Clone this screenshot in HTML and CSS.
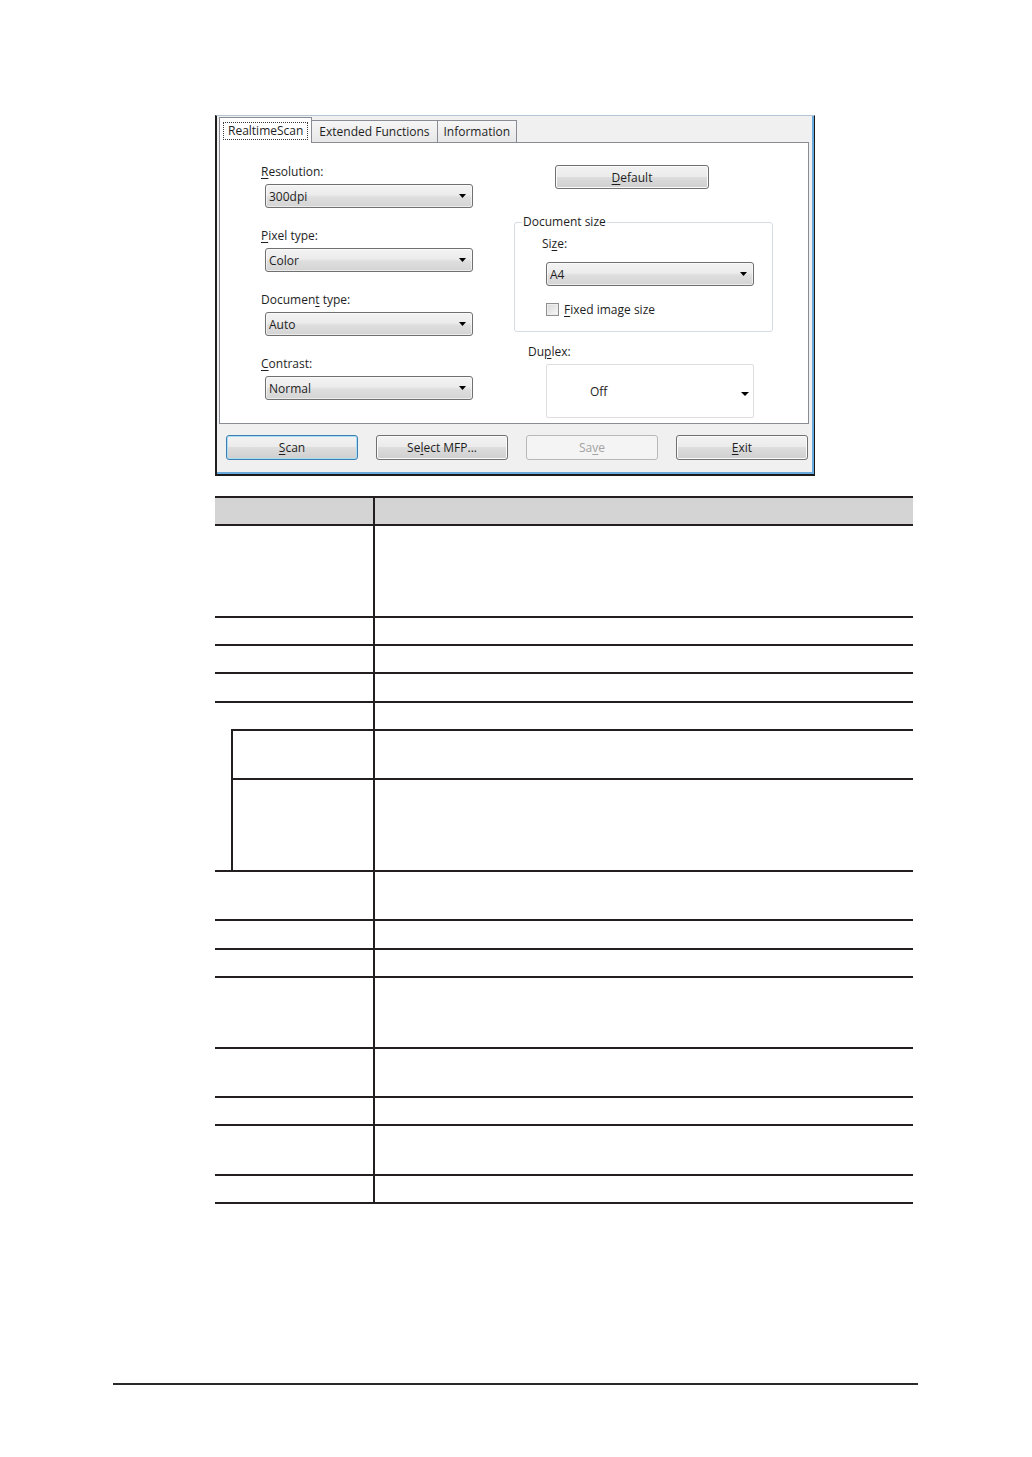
FILE: index.html
```html
<!DOCTYPE html>
<html>
<head>
<meta charset="utf-8">
<title>RealtimeScan</title>
<link rel="stylesheet" href="styles.css">
</head>
<body>
<div class="page">
  <div class="dialog">
    <div class="tabs">
      <div class="tab active"><span class="focus">RealtimeScan</span></div>
      <div class="tab tab-wide">Extended Functions</div>
      <div class="tab">Information</div>
    </div>
    <div class="panel">
      <div class="col-left">
        <div class="label"><u>R</u>esolution:</div>
        <div class="combo"><span>300dpi</span><svg class="arrow" width="7" height="4" viewBox="0 0 7 4"><path d="M0 0H7L3.5 4Z"/></svg></div>
        <div class="label"><u>P</u>ixel type:</div>
        <div class="combo"><span>Color</span><svg class="arrow" width="7" height="4" viewBox="0 0 7 4"><path d="M0 0H7L3.5 4Z"/></svg></div>
        <div class="label">Documen<u>t</u> type:</div>
        <div class="combo"><span>Auto</span><svg class="arrow" width="7" height="4" viewBox="0 0 7 4"><path d="M0 0H7L3.5 4Z"/></svg></div>
        <div class="label"><u>C</u>ontrast:</div>
        <div class="combo"><span>Normal</span><svg class="arrow" width="7" height="4" viewBox="0 0 7 4"><path d="M0 0H7L3.5 4Z"/></svg></div>
      </div>
      <div class="col-right">
        <div class="btn btn-default"><u>D</u>efault</div>
        <fieldset class="docsize">
          <legend>Document size</legend>
          <div class="label size-label">Si<u>z</u>e:</div>
          <div class="combo size-combo"><span>A4</span><svg class="arrow" width="7" height="4" viewBox="0 0 7 4"><path d="M0 0H7L3.5 4Z"/></svg></div>
          <div class="check-row"><span class="checkbox"></span><span><u>F</u>ixed image size</span></div>
        </fieldset>
        <div class="label duplex-label">Du<u>p</u>lex:</div>
        <div class="duplex"><span>Off</span><svg class="arrow arrow-duplex" width="8" height="4" viewBox="0 0 8 4"><path d="M0 0H8L4 4Z"/></svg></div>
      </div>
    </div>
    <div class="actions">
      <div class="btn btn-action btn-focus"><span><u>S</u>can</span></div>
      <div class="btn btn-action"><span>Se<u>l</u>ect MFP...</span></div>
      <div class="btn btn-action btn-disabled"><span>Sa<u>v</u>e</span></div>
      <div class="btn btn-action"><span><u>E</u>xit</span></div>
    </div>
  </div>

  <div class="table">
    <div class="row head h26"><div class="c1"></div><div class="c2"></div></div>
    <div class="row h90"><div class="c1"></div><div class="c2"></div></div>
    <div class="row h26"><div class="c1"></div><div class="c2"></div></div>
    <div class="row h26"><div class="c1"></div><div class="c2"></div></div>
    <div class="row h27"><div class="c1"></div><div class="c2"></div></div>
    <div class="group">
      <div class="row plain h26"><div class="c1"></div><div class="c2"></div></div>
      <div class="subgroup">
        <div class="subrow h47"><div class="c1"></div><div class="c2"></div></div>
        <div class="subrow h90"><div class="c1"></div><div class="c2"></div></div>
      </div>
    </div>
    <div class="row h47"><div class="c1"></div><div class="c2"></div></div>
    <div class="row h27"><div class="c1"></div><div class="c2"></div></div>
    <div class="row h26"><div class="c1"></div><div class="c2"></div></div>
    <div class="row h69"><div class="c1"></div><div class="c2"></div></div>
    <div class="row h47"><div class="c1"></div><div class="c2"></div></div>
    <div class="row h26"><div class="c1"></div><div class="c2"></div></div>
    <div class="row h48"><div class="c1"></div><div class="c2"></div></div>
    <div class="row h26"><div class="c1"></div><div class="c2"></div></div>
  </div>

  <div class="footer-rule"></div>
</div>
</body>
</html>
```
FILE: styles.css
```css
* { box-sizing: border-box; }

body {
  margin: 0;
  background: #ffffff;
  font-family: "Open Sans", "Liberation Sans", sans-serif;
}

.page {
  width: 1032px;
  height: 1457px;
  padding-top: 115px;
  overflow: hidden;
}

/* ---------- dialog ---------- */
.dialog {
  margin-left: 215px;
  width: 600px;
  height: 361px;
  background: #f0f0f0;
  border-left: 2px solid #1e1e1e;
  border-top: 1px solid #b4c4d4;
  border-right: 1px solid #1a1a1a;
  border-bottom: 2px solid #1a1a1a;
  box-shadow: inset -2px -2px 0 #6aa9dc;
  font-size: 12px;
  color: #1e1e1e;
  display: flex;
  flex-direction: column;
}

u { text-decoration: underline; text-underline-offset: 2px; }

.tabs {
  height: 26px;
  display: flex;
  align-items: flex-end;
  padding-left: 2px;
}

.tab {
  height: 22px;
  padding: 0 6px;
  display: flex;
  align-items: center;
  border: 1px solid #898c95;
  border-bottom: none;
  margin-left: -1px;
  background: linear-gradient(#f6f6f6, #e7e7e7);
  white-space: nowrap;
}

.tab-wide { padding: 0 7px; }

.tab:first-child { margin-left: 0; }

.tab.active {
  height: 26px;
  margin-bottom: -1px;
  padding: 0 3px;
  background: #ffffff;
  position: relative;
  z-index: 1;
}

.focus {
  height: 18px;
  padding: 0 4px;
  display: flex;
  align-items: center;
  border: 1px dotted #3a3a3a;
}

.panel {
  margin-left: 2px;
  width: 590px;
  height: 282px;
  background: #ffffff;
  border: 1px solid #898c95;
  display: flex;
  padding: 21px 0 0 41px;
}

.col-left {
  width: 212px;
  display: flex;
  flex-direction: column;
}

.label {
  height: 16px;
  line-height: 16px;
  margin-bottom: 4px;
  white-space: nowrap;
}

.col-left .label { margin-top: 1px; margin-bottom: 4px; }
.col-left .label:first-child { margin-top: 0; }

.combo {
  width: 208px;
  height: 24px;
  margin-left: 4px;
  margin-bottom: 19px;
  border: 1px solid #707070;
  border-radius: 3px;
  background: linear-gradient(#f3f3f3 0%, #ececec 45%, #dedede 55%, #d4d4d4 100%);
  box-shadow: inset 0 0 0 1px rgba(255,255,255,0.55);
  display: flex;
  align-items: center;
  justify-content: space-between;
  padding: 0 6px 0 3px;
}

.arrow { display: block; fill: #000; }

.col-right {
  margin-left: 41px;
  width: 259px;
  display: flex;
  flex-direction: column;
  align-items: flex-start;
}

.btn {
  border: 1px solid #707070;
  border-radius: 3px;
  background: linear-gradient(#f2f2f2 0%, #ebebeb 50%, #dddddd 50%, #cfcfcf 100%);
  box-shadow: inset 0 0 0 1px #fbfbfb;
  display: flex;
  align-items: center;
  justify-content: center;
  white-space: nowrap;
}

.btn-default {
  margin: 1px 0 0 41px;
  width: 154px;
  height: 24px;
}

.docsize {
  margin: 25px 0 0 0;
  width: 259px;
  min-width: 0;
  border: 1px solid #d5dde3;
  border-radius: 3px;
  padding: 0 0 14px 7px;
}

.docsize legend {
  padding: 0 1px;
  line-height: 16px;
  white-space: nowrap;
}

.size-label { margin: 6px 0 0 20px; }

.size-combo { margin: 10px 0 0 24px; }

.check-row {
  margin: 15px 0 0 24px;
  height: 16px;
  display: flex;
  align-items: center;
  gap: 5px;
}

.checkbox {
  width: 13px;
  height: 13px;
  border: 1px solid #8e8f8f;
  background: linear-gradient(135deg, #d8d8d8, #f8f8f8);
  box-shadow: inset 0 0 0 1px #eeeeee;
}

.duplex-label { margin: 12px 0 0 14px; }

.duplex {
  width: 208px;
  height: 54px;
  margin: 4px 0 0 32px;
  background: #ffffff;
  border: 1px solid #dedede;
  border-radius: 2px;
  display: flex;
  align-items: center;
  justify-content: space-between;
  padding: 0 4px 0 43px;
}

.arrow-duplex { margin-top: 6px; }

.actions {
  display: flex;
  gap: 18px;
  padding-left: 9px;
  margin-top: 11px;
}

.btn-action {
  width: 132px;
  height: 25px;
}

.btn-focus {
  border-color: #3c7fb1;
  box-shadow: inset 0 0 0 1px #a9dcf5;
}

.btn-disabled {
  border-color: #b5b9bc;
  background: #f4f4f4;
  box-shadow: none;
  color: #a3a3a3;
}

/* ---------- table ---------- */
.table {
  margin: 20px 0 0 215px;
  width: 698px;
}

.row, .subrow {
  display: grid;
  box-sizing: content-box;
}

.row {
  grid-template-columns: 160px 1fr;
  border-bottom: 2px solid #231f20;
}

.row.head {
  border-top: 2px solid #231f20;
  background: #d4d4d4;
}

.row.plain { border-bottom: none; }

.c1 { border-right: 2px solid #231f20; }

.group { border-bottom: 2px solid #231f20; }

.subgroup {
  margin-left: 16px;
  border-left: 2px solid #231f20;
}

.subrow {
  grid-template-columns: 142px 1fr;
  border-top: 2px solid #231f20;
}

.h26 { height: 26px; }
.h27 { height: 27px; }
.h47 { height: 47px; }
.h48 { height: 48px; }
.h69 { height: 69px; }
.h90 { height: 90px; }

.footer-rule {
  margin: 179px 0 0 113px;
  width: 805px;
  height: 2px;
  background: #2a2a2a;
}
```
